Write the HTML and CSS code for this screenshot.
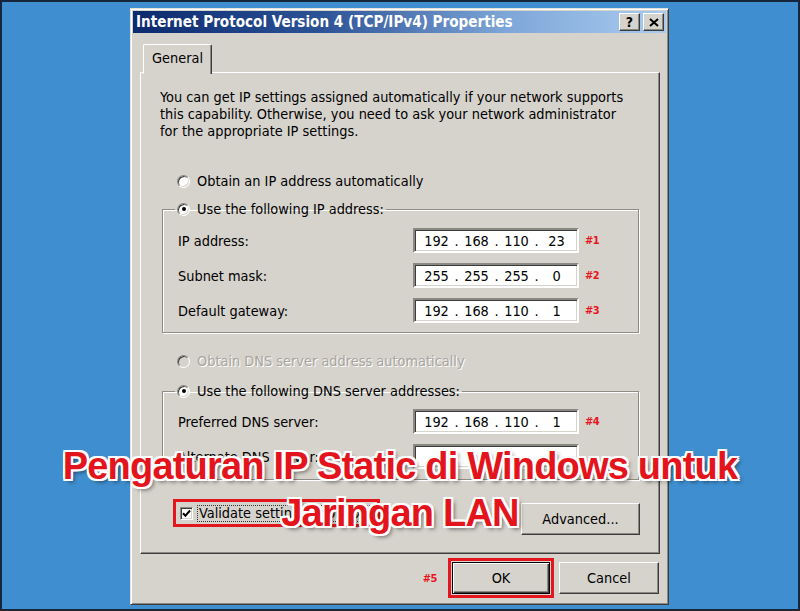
FILE: index.html
```html
<!DOCTYPE html>
<html lang="id">
<head>
<meta charset="utf-8">
<title>Pengaturan IP Static di Windows untuk Jaringan LAN</title>
<link rel="stylesheet" href="styles.css">
</head>
<body>
<div class="screen">
  <div class="dialog">
    <div class="titlebar">
      <span class="title">Internet Protocol Version 4 (TCP/IPv4) Properties</span>
      <span class="tbtn help">?</span>
      <span class="tbtn close"><svg width="10" height="9" viewBox="0 0 10 9"><path d="M1 1l8 7M9 1l-8 7" stroke="#000" stroke-width="2" fill="none"/></svg></span>
    </div>
    <div class="body">
      <div class="tabs"><div class="tab">General</div></div>
      <div class="panel">
        <p class="desc">You can get IP settings assigned automatically if your network supports<br>this capability. Otherwise, you need to ask your network administrator<br>for the appropriate IP settings.</p>

        <div class="option"><span class="radio"></span>Obtain an IP address automatically</div>
        <fieldset class="group">
          <legend><span class="radio on"></span>Use the following IP address:</legend>
          <div class="field">
            <span class="label">IP address:</span>
            <div class="ip"><span>192</span><i>.</i><span>168</span><i>.</i><span>110</span><i>.</i><span>23</span></div>
            <span class="tag">#1</span>
          </div>
          <div class="field">
            <span class="label">Subnet mask:</span>
            <div class="ip"><span>255</span><i>.</i><span>255</span><i>.</i><span>255</span><i>.</i><span>0</span></div>
            <span class="tag">#2</span>
          </div>
          <div class="field">
            <span class="label">Default gateway:</span>
            <div class="ip"><span>192</span><i>.</i><span>168</span><i>.</i><span>110</span><i>.</i><span>1</span></div>
            <span class="tag">#3</span>
          </div>
        </fieldset>

        <div class="option off dns-auto"><span class="radio"></span>Obtain DNS server address automatically</div>
        <fieldset class="group dns">
          <legend><span class="radio on"></span>Use the following DNS server addresses:</legend>
          <div class="field">
            <span class="label">Preferred DNS server:</span>
            <div class="ip"><span>192</span><i>.</i><span>168</span><i>.</i><span>110</span><i>.</i><span>1</span></div>
            <span class="tag">#4</span>
          </div>
          <div class="field">
            <span class="label">Alternate DNS server:</span>
            <div class="ip"><span></span><i>.</i><span></span><i>.</i><span></span><i>.</i><span></span></div>
          </div>
        </fieldset>

        <div class="footer-row">
          <div class="mark check-wrap">
            <span class="checkbox"><svg width="9" height="9" viewBox="0 0 9 9"><path d="M1 4.2l2.4 2.6L8 1.5" stroke="#000" stroke-width="2" fill="none"/></svg></span>
            <span class="focus">Validate settings upon exit</span>
          </div>
          <button class="btn advanced">Advanced...</button>
        </div>
      </div>

      <div class="actions">
        <span class="tag ok-tag">#5</span>
        <div class="mark ok-wrap"><button class="btn default">OK</button></div>
        <button class="btn">Cancel</button>
      </div>
    </div>
  </div>

  <h1 class="headline">Pengaturan IP Static di Windows untuk Jaringan LAN</h1>
</div>
</body>
</html>
```

FILE: styles.css
```css
* { box-sizing: border-box; }

html, body {
  margin: 0;
  padding: 0;
  background: #3f8fd0;
}

.screen {
  position: relative;
  width: 800px;
  height: 611px;
  overflow: hidden;
  background: #3f8fd0;
  border: 2px solid #16263b;
  padding: 6px 0 0 128px;
  font-family: "DejaVu Sans Condensed", "DejaVu Sans", sans-serif;
  font-stretch: condensed;
  font-size: 14.4px;
  color: #000;
}

/* ---- classic window frame ---- */
.dialog {
  width: 539px;
  height: 597px;
  background: #d6d3cd;
  border: 1px solid;
  border-color: #e4e1dc #3c3c3c #3c3c3c #e4e1dc;
  box-shadow: inset 1px 1px 0 #fff, inset -1px -1px 0 #8a8882;
  padding: 2px;
  display: flex;
  flex-direction: column;
}

.titlebar {
  height: 22px;
  display: flex;
  align-items: center;
  gap: 3px;
  padding: 0 2px 0 3px;
  background: linear-gradient(90deg, #0c2a6e 0%, #2c5296 35%, #7ea6d8 70%, #a9cbee 100%);
}

.title {
  flex: 1;
  color: #fff;
  font-weight: bold;
  font-size: 15.1px;
  white-space: nowrap;
}

.tbtn {
  width: 21px;
  height: 18px;
  display: grid;
  place-items: center;
  background: #d6d3cd;
  border: 1px solid;
  border-color: #fff #3c3c3c #3c3c3c #fff;
  box-shadow: inset -1px -1px 0 #8a8882;
  font-weight: bold;
  font-size: 14px;
  line-height: 1;
}

/* ---- dialog body ---- */
.body {
  flex: 1;
  padding: 11px 6px 0 7px;
  display: flex;
  flex-direction: column;
}

.tabs {
  height: 28px;
  display: flex;
  position: relative;
  z-index: 1;
}

.tab {
  margin-left: 3px;
  width: 69px;
  height: 30px;
  padding: 5px 0 0 8px;
  background: #d6d3cd;
  border: 1px solid;
  border-bottom: none;
  border-color: #fff #3c3c3c #fff #fff;
  box-shadow: inset -1px 0 0 #8a8882;
  border-radius: 2px 2px 0 0;
}

.panel {
  height: 482px;
  border: 1px solid;
  border-color: #fff #3c3c3c #3c3c3c #fff;
  box-shadow: inset -1px -1px 0 #8a8882;
  padding: 16px 19px 0 19px;
}

.desc {
  margin: 0;
  line-height: 17px;
  white-space: nowrap;
}

.option {
  height: 20px;
  display: flex;
  align-items: center;
  gap: 7px;
  margin: 31px 0 0 17px;
}

.option.off {
  color: #a8a59f;
  text-shadow: 1px 1px 0 #fff;
}

.dns-auto { margin-top: 18px; }

/* radio & checkbox */
.radio {
  width: 13px;
  height: 13px;
  flex: none;
  border-radius: 50%;
  background: #fff;
  border: 1px solid;
  border-color: #8a8882 #fff #fff #8a8882;
  box-shadow: inset 1px 1px 0 #3c3c3c, inset -1px -1px 0 #d6d3cd;
  display: grid;
  place-items: center;
}

.option.off .radio { background: #d6d3cd; }

.radio.on::after {
  content: "";
  width: 4px;
  height: 4px;
  border-radius: 50%;
  background: #000;
}

.checkbox {
  width: 13px;
  height: 13px;
  flex: none;
  background: #fff;
  border: 1px solid;
  border-color: #8a8882 #fff #fff #8a8882;
  box-shadow: inset 1px 1px 0 #3c3c3c, inset -1px -1px 0 #d6d3cd;
  display: grid;
  place-items: center;
}

/* group boxes */
.group {
  margin: 8px 1px 0 2px;
  padding: 9px 15px 9px 15px;
  min-width: 0;
  border: 1px solid #8f8c86;
  box-shadow: 1px 1px 0 #fff, inset 1px 1px 0 #fff;
}

.group.dns {
  margin-top: 10px;
  padding-top: 8px;
  padding-bottom: 10px;
}

.group legend {
  margin-left: -3px;
  padding: 0 2px;
  height: 20px;
  display: flex;
  align-items: center;
  gap: 7px;
}

.field {
  height: 25px;
  display: flex;
  align-items: center;
}

.field + .field { margin-top: 10px; }

.label {
  width: 235px;
  flex: none;
}

.ip {
  width: 166px;
  height: 25px;
  flex: none;
  background: #fff;
  border: 2px solid;
  border-color: #8a8882 #fff #fff #8a8882;
  box-shadow: inset 1px 1px 0 #3c3c3c, inset -1px -1px 0 #d6d3cd;
  display: flex;
  align-items: center;
  padding-left: 4.5px;
}

.ip span {
  width: 34px;
  text-align: center;
}

.ip i {
  width: 6px;
  font-style: normal;
  text-align: center;
}

.tag {
  margin-left: 6px;
  color: #e8141c;
  font-weight: bold;
  font-size: 11px;
  letter-spacing: -0.5px;
}

/* bottom row inside the tab */
.footer-row {
  margin-top: 19px;
  display: flex;
  align-items: flex-start;
}

.mark {
  border: 3px solid #e3161e;
}

.check-wrap {
  margin-left: 13px;
  width: 207px;
  height: 28px;
  display: flex;
  align-items: center;
  gap: 5px;
  padding-left: 4px;
}

.focus {
  outline: 1px dotted #333;
  outline-offset: 0;
  line-height: 15px;
  padding: 0 1px;
  white-space: nowrap;
}

.btn {
  font: inherit;
  color: #000;
  height: 32px;
  background: #d6d3cd;
  border: 1px solid;
  border-color: #fff #3c3c3c #3c3c3c #fff;
  box-shadow: inset -1px -1px 0 #8a8882;
  padding: 0;
}

.advanced {
  margin: 4px 0 0 auto;
  width: 119px;
}

.actions {
  margin-top: 4px;
  display: flex;
  align-items: center;
  justify-content: flex-end;
  padding-right: 1px;
  gap: 5px;
}

.actions .btn { width: 100px; }

.ok-tag { margin-right: 6px; }

.ok-wrap { padding: 1px; }

.btn.default {
  border: 1px solid #000;
  box-shadow: inset 1px 1px 0 #fff, inset -1px -1px 0 #3c3c3c, inset -2px -2px 0 #8a8882;
  width: 98px;
}

/* headline over the window */
.headline {
  position: absolute;
  left: 40px;
  right: 40px;
  top: 441px;
  margin: 0;
  text-align: center;
  font-family: "Liberation Sans", sans-serif;
  font-weight: bold;
  font-size: 38px;
  letter-spacing: -0.8px;
  line-height: 47px;
  color: #e3141b;
  text-shadow:
    2px 0 0 #fff, -2px 0 0 #fff, 0 2px 0 #fff, 0 -2px 0 #fff,
    2px 2px 0 #fff, -2px -2px 0 #fff, 2px -2px 0 #fff, -2px 2px 0 #fff,
    3px 3px 4px rgba(0, 0, 0, 0.55);
}
```
